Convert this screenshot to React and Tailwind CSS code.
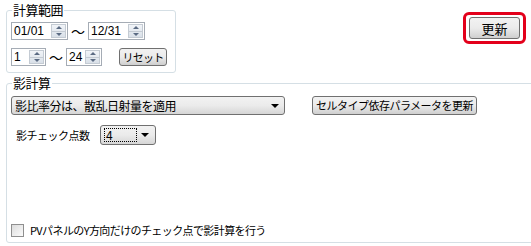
import React from "react";

const font = { fontFamily: '"Noto Sans CJK JP", "Liberation Sans", sans-serif' };

function SpinBox({ value, width }) {
  return (
    <div className={`flex h-[18px] items-center border border-[#a5acb5] bg-white ${width}`}>
      <span className="flex-1 whitespace-nowrap pl-[2px] text-[12px] leading-none text-black" style={{ fontFamily: '"Liberation Sans", sans-serif' }}>
        {value}
      </span>
      <div className="mr-[1px] flex h-[14px] w-[15px] flex-col border border-[#c4cbd3] bg-gradient-to-b from-[#f1f4f8] to-[#d9e0e8]">
        <div className="flex flex-1 items-center justify-center border-b border-[#c4cbd3]">
          <div className="h-0 w-0 border-x-[3px] border-b-[3px] border-x-transparent border-b-[#5b6b83]" />
        </div>
        <div className="flex flex-1 items-center justify-center">
          <div className="h-0 w-0 border-x-[3px] border-t-[3px] border-x-transparent border-t-[#5b6b83]" />
        </div>
      </div>
    </div>
  );
}

function Btn({ children, className = "" }) {
  return (
    <div
      className={`flex items-center justify-center whitespace-nowrap rounded-[3px] border border-[#707070] bg-gradient-to-b from-[#f2f2f2] via-[#ebebeb] to-[#cfcfcf] leading-none text-black ${className}`}
    >
      {children}
    </div>
  );
}

function Arrow() {
  return <div className="h-0 w-0 border-x-[4px] border-t-[4px] border-x-transparent border-t-black" />;
}

export default function App() {
  return (
    <div className="relative h-[246px] w-[531px] overflow-hidden bg-white" style={font}>
      <div className="flex items-start">
        {/* 計算範囲 */}
        <fieldset className="ml-[6px] mt-[3px] h-[70px] w-[170px] rounded-[3px] border border-[#d5dfe5] px-[4px]">
          <legend className="ml-[1px] whitespace-nowrap px-[1px] text-[13px] leading-[14px] tracking-[-0.5px] text-black">計算範囲</legend>
          <div className="mt-[5px] flex items-center">
            <SpinBox value="01/01" width="w-[57px]" />
            <span className="mx-[3px] text-[14px] leading-none">〜</span>
            <SpinBox value="12/31" width="w-[57px]" />
          </div>
          <div className="mt-[8px] flex items-center">
            <SpinBox value="1" width="w-[35px]" />
            <span className="mx-[3px] text-[14px] leading-none">〜</span>
            <SpinBox value="24" width="w-[36px]" />
            <Btn className="ml-[17px] h-[18px] w-[48px] text-[11px] tracking-[-0.8px]">リセット</Btn>
          </div>
        </fieldset>

        {/* 更新 */}
        <div className="ml-auto mr-[5px] mt-[12px] rounded-[6px] border-[3px] border-[#e3001b] px-[3px] py-[2px]">
          <Btn className="h-[22px] w-[51px] text-[13px]">更新</Btn>
        </div>
      </div>

      {/* 影計算 */}
      <fieldset className="ml-[6px] mt-[3px] h-[167px] w-[540px] rounded-[3px] border border-[#d5dfe5] px-[4px]">
        <legend className="ml-[1px] whitespace-nowrap px-[1px] text-[13px] leading-[14px] tracking-[-0.5px] text-black">影計算</legend>
        <div className="mt-[6px] flex items-center">
          <div className="flex h-[19px] w-[274px] items-center rounded-[3px] border border-[#707070] bg-gradient-to-b from-[#f2f2f2] via-[#ebebeb] to-[#d6d6d6] pl-[3px] pr-[5px]">
            <span className="flex-1 whitespace-nowrap text-[12px] leading-none tracking-[-0.5px] text-black">影比率分は、散乱日射量を適用</span>
            <Arrow />
          </div>
          <Btn className="ml-[27px] h-[19px] w-[165px] text-[11px] tracking-[-0.5px]">セルタイプ依存パラメータを更新</Btn>
        </div>
        <div className="mt-[10px] flex items-center">
          <span className="ml-[5px] w-[84px] whitespace-nowrap text-[11px] leading-none tracking-[-0.5px] text-black">影チェック点数</span>
          <div className="flex h-[20px] w-[56px] items-center rounded-[3px] border border-[#707070] bg-gradient-to-b from-[#f2f2f2] via-[#ebebeb] to-[#d6d6d6] px-[3px]">
            <span className="flex h-[14px] w-[33px] items-center border border-dotted border-black pl-[1px] text-[12px] leading-none">4</span>
            <div className="ml-auto mr-[3px]">
              <Arrow />
            </div>
          </div>
        </div>
        <div className="mt-[79px] flex items-center">
          <div className="h-[13px] w-[13px] border border-[#8f8f8f] bg-gradient-to-br from-[#dcdcdc] to-[#fbfbfb]" />
          <span className="ml-[6px] whitespace-nowrap text-[11px] leading-none tracking-[-0.6px] text-black">PVパネルのY方向だけのチェック点で影計算を行う</span>
        </div>
      </fieldset>
    </div>
  );
}
